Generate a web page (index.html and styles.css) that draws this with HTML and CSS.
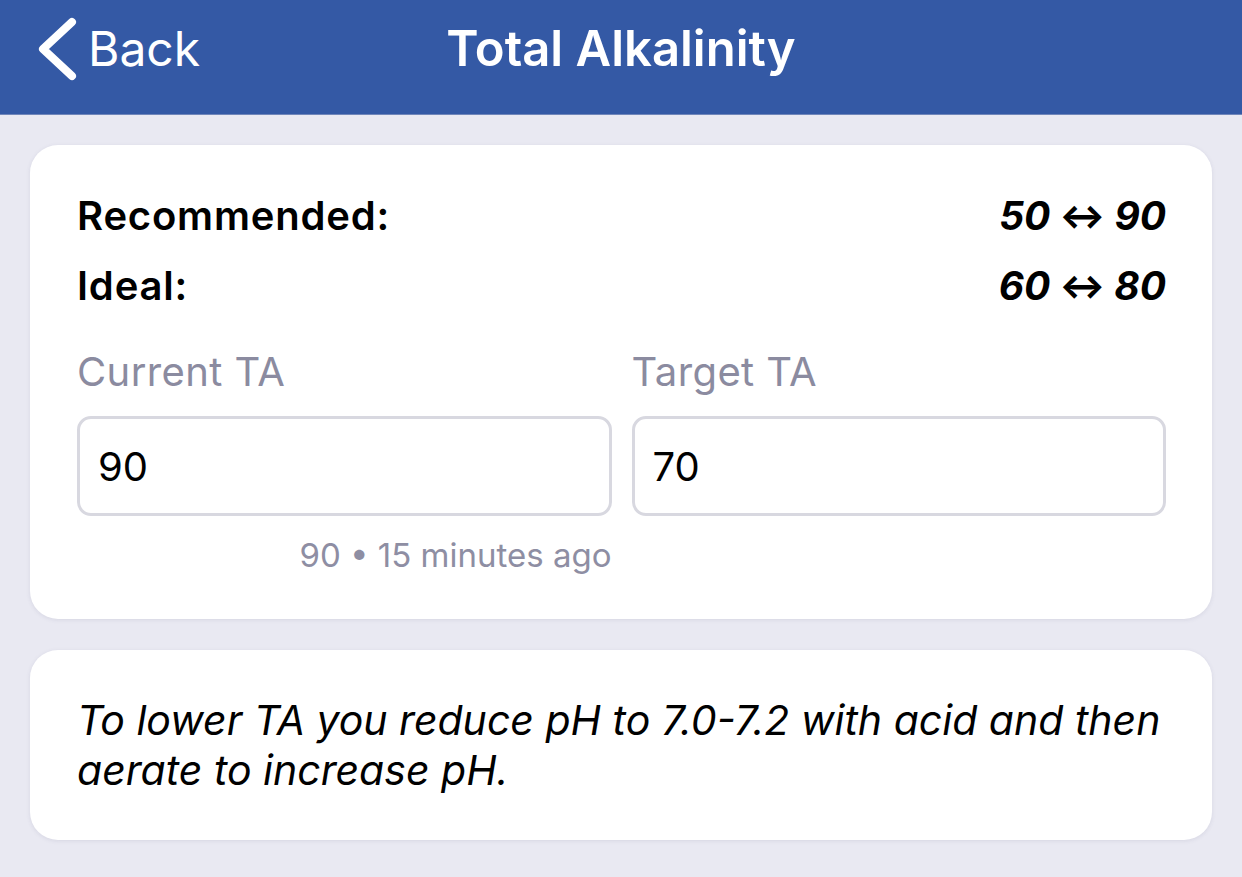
FILE: index.html
```html
<!DOCTYPE html>
<html lang="en">
<head>
    <meta charset="UTF-8">
    <meta name="viewport" content="width=device-width, initial-scale=1.0">
    <title>Total Alkalinity</title>
    <link rel="stylesheet" href="styles.css">
</head>
<body>
    <header class="nav-bar">
        <a class="back" href="#">
            <svg class="chevron" width="40" height="64" viewBox="0 0 40 64">
                <path d="M35 5 L6 32 L35 59" fill="none" stroke="#fff" stroke-width="8" stroke-linecap="round" stroke-linejoin="round"/>
            </svg>
            <span>Back</span>
        </a>
        <h1 class="nav-title">Total Alkalinity</h1>
    </header>

    <main class="content">
        <section class="card">
            <div class="range-row">
                <span class="range-label">Recommended:</span>
                <span class="range-value">50 <span class="arrow">&harr;</span> 90</span>
            </div>
            <div class="range-row">
                <span class="range-label">Ideal:</span>
                <span class="range-value">60 <span class="arrow">&harr;</span> 80</span>
            </div>

            <div class="fields">
                <div class="field">
                    <label class="field-label" for="current-ta">Current TA</label>
                    <input class="field-input" id="current-ta" type="text" value="90">
                    <div class="field-hint">90 &bull; 15 minutes ago</div>
                </div>
                <div class="field">
                    <label class="field-label" for="target-ta">Target TA</label>
                    <input class="field-input" id="target-ta" type="text" value="70">
                </div>
            </div>
        </section>

        <section class="card note">
            <p>To lower TA you reduce pH to 7.0-7.2 with acid and then aerate to increase pH.</p>
        </section>
    </main>
</body>
</html>
```

FILE: styles.css
```css
body {
    margin: 0;
    background-color: #e9e9f2;
    font-family: Inter, "Noto Sans", sans-serif;
    color: #000;
}
.nav-bar {
    position: relative;
    height: 115px;
    background-color: #3459a5;
    border-bottom: 1px solid #7086ba;
    box-sizing: border-box;
    display: flex;
    justify-content: center;
    align-items: flex-start;
    padding-top: 19px;
}
.back {
    position: absolute;
    left: 37px;
    top: 17px;
    display: flex;
    align-items: center;
    gap: 11px;
    color: #fff;
    text-decoration: none;
    font-size: 48px;
    line-height: 58px;
}
.nav-title {
    margin: 0;
    color: #fff;
    font-size: 49px;
    line-height: 59px;
    font-weight: 600;
}
.content {
    padding: 30px 30px;
    display: flex;
    flex-direction: column;
    gap: 31px;
}
.card {
    background: #fff;
    border-radius: 28px;
    box-shadow: 0 1px 4px rgba(80, 80, 120, 0.12);
    padding: 43px 46px 44px 47px;
}
.range-row {
    display: flex;
    justify-content: space-between;
    align-items: center;
    height: 54px;
    margin-bottom: 16px;
}
.range-row + .range-row {
    margin-bottom: 0;
}
.range-label {
    font-size: 40px;
    font-weight: 600;
    letter-spacing: 0.8px;
}
.range-value {
    font-style: italic;
    font-weight: 700;
    font-size: 39px;
}
.arrow {
    font-style: normal;
    font-weight: 800;
    font-size: 34px;
    vertical-align: 2px;
}
.fields {
    display: flex;
    gap: 20px;
    margin-top: 36px;
}
.field {
    flex: 1;
    min-width: 0;
    display: flex;
    flex-direction: column;
}
.field-label {
    color: #8b8ba0;
    font-size: 40px;
    line-height: 48px;
    letter-spacing: 0.4px;
    margin-bottom: 20px;
}
.field-input {
    width: 100%;
    height: 100px;
    box-sizing: border-box;
    border: 3px solid #d8d8e0;
    border-radius: 14px;
    padding: 0 18px;
    font-family: inherit;
    font-size: 40px;
    color: #000;
    background: #fff;
    outline: none;
}
.field-hint {
    text-align: right;
    color: #8e8ea3;
    font-size: 33px;
    line-height: 40px;
    margin-top: 19px;
}
.note {
    padding: 45px 46px 45px 47px;
}
.note p {
    margin: 0;
    font-size: 41px;
    font-style: italic;
    line-height: 50px;
}
```
